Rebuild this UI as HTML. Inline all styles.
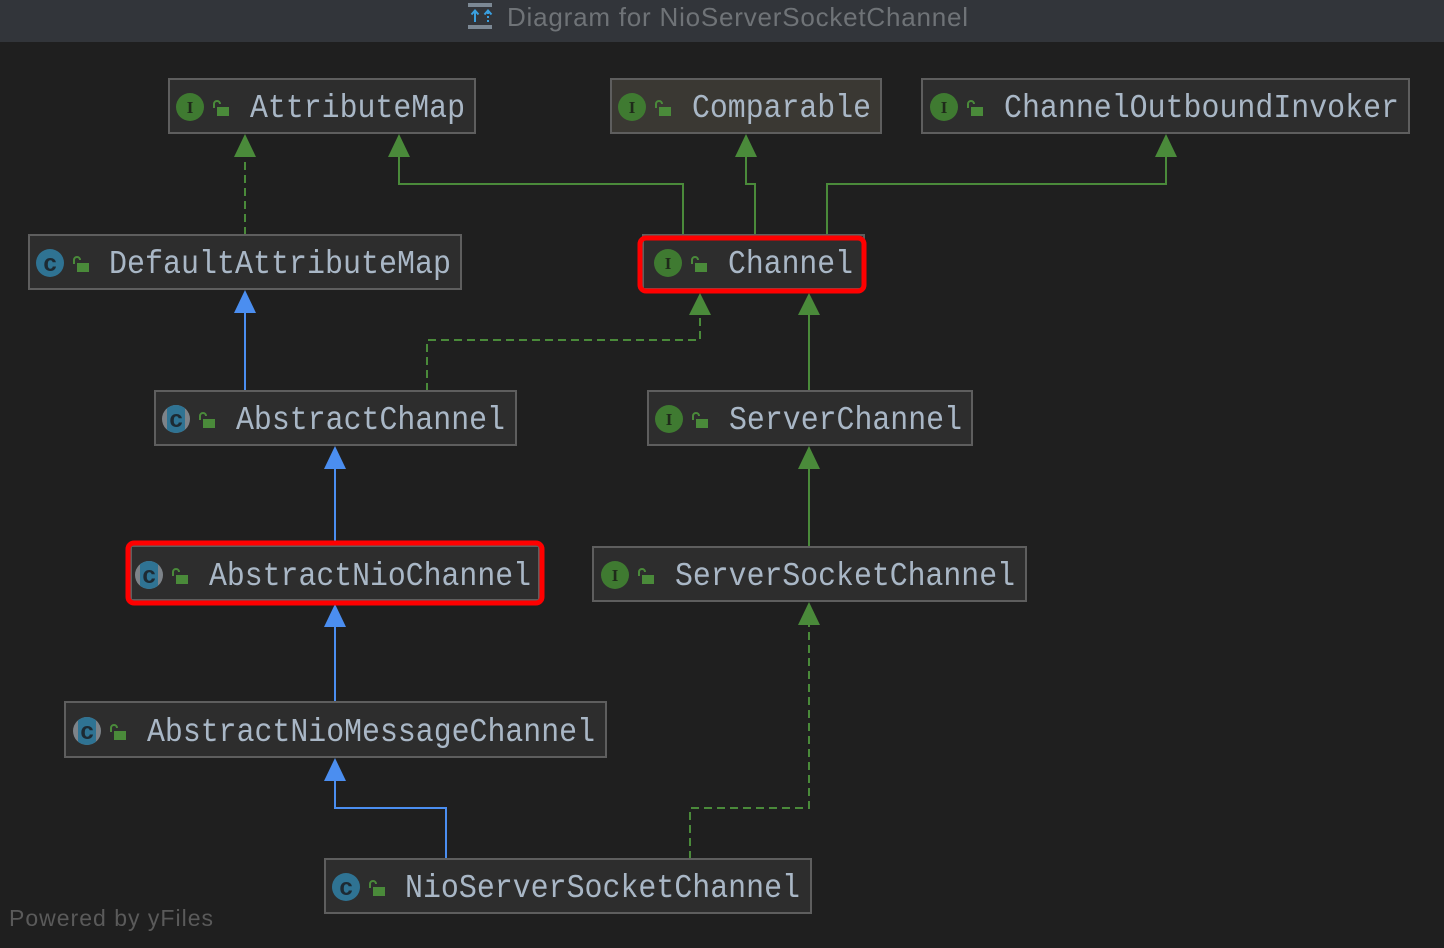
<!DOCTYPE html>
<html><head><meta charset="utf-8"><style>
html,body{margin:0;padding:0;background:#1f1f1f;width:1444px;height:948px;overflow:hidden}
svg{display:block}
.t{font-family:"Liberation Mono",monospace;font-size:33px;fill:#a9b7c6}
</style></head><body>
<svg width="1444" height="948" viewBox="0 0 1444 948" xmlns="http://www.w3.org/2000/svg">
<defs>
<clipPath id="cc"><circle cx="0" cy="0" r="14"/></clipPath>
</defs>
<rect x="0" y="0" width="1444" height="42" fill="#32353a"/>
<rect x="0" y="42" width="1444" height="906" fill="#1f1f1f"/>
<!-- title icon -->
<rect x="468" y="3" width="24" height="4" fill="#7c8894"/>
<rect x="468" y="25" width="24" height="4" fill="#7c8894"/>
<path d="M475 22V11M471.5 14.5L475 10.5L478.5 14.5" stroke="#3aa0e0" stroke-width="2" fill="none"/>
<path d="M488 22V11" stroke="#3aa0e0" stroke-width="2" stroke-dasharray="2 2" fill="none"/>
<path d="M484.5 14.5L488 10.5L491.5 14.5" stroke="#3aa0e0" stroke-width="2" fill="none"/>
<text x="507" y="26" font-family="Liberation Sans,sans-serif" font-size="26" fill="#6f7377" textLength="461">Diagram for NioServerSocketChannel</text>

<g fill="none" stroke-width="2">
<g stroke="#4a8a3a">
<path d="M683 236V184H399V152"/>
<path d="M755 236V184H746V152"/>
<path d="M827 236V184H1166V152"/>
<path d="M809 391V312"/>
<path d="M809 547V467"/>
</g>
<g stroke="#4a8a3a" stroke-dasharray="8 5">
<path d="M245 235V152"/>
<path d="M427 391V340H700V312"/>
<path d="M690 859V808H809V623"/>
</g>
<g stroke="#4b8ef0">
<path d="M245 391V310"/>
<path d="M335 546V466"/>
<path d="M335 702V625"/>
<path d="M446 859V808H335V778"/>
</g>
</g>
<g fill="#4a8a3a">
<path d="M245 134L234 157H256Z"/><path d="M399 134L388 157H410Z"/><path d="M746 134L735 157H757Z"/><path d="M1166 134L1155 157H1177Z"/>
<path d="M700 293L689 315H711Z"/><path d="M809 293L798 315H820Z"/>
<path d="M809 446L798 469H820Z"/><path d="M809 602L798 625H820Z"/>
</g>
<g fill="#4b8ef0">
<path d="M245 290L234 313H256Z"/><path d="M335 446L324 469H346Z"/><path d="M335 604L324 627H346Z"/><path d="M335 758L324 781H346Z"/>
</g>

<g stroke="#5e5e5e" stroke-width="2">
<rect x="169" y="79" width="306" height="54" fill="#2d2d2d"/>
<rect x="611" y="79" width="270" height="54" fill="#3a3833"/>
<rect x="922" y="79" width="487" height="54" fill="#2d2d2d"/>
<rect x="29" y="235" width="432" height="54" fill="#2d2d2d"/>
<rect x="643" y="235" width="221" height="54" fill="#2d2d2d"/>
<rect x="155" y="391" width="361" height="54" fill="#2d2d2d"/>
<rect x="648" y="391" width="324" height="54" fill="#2d2d2d"/>
<rect x="131" y="546" width="408" height="54" fill="#2d2d2d"/>
<rect x="593" y="547" width="433" height="54" fill="#2d2d2d"/>
<rect x="65" y="702" width="541" height="55" fill="#2d2d2d"/>
<rect x="325" y="859" width="486" height="54" fill="#2d2d2d"/>
</g>
<g fill="none" stroke="#f00" stroke-width="5">
<rect x="640" y="238" width="224" height="53" rx="6"/>
<rect x="128" y="543" width="414" height="60" rx="6"/>
</g>

<g font-family="Liberation Serif,serif" font-size="17" font-weight="bold" text-anchor="middle" fill="#1f2a1a">
<circle cx="190" cy="107" r="14" fill="#3f7a31"/><text x="190" y="113">I</text>
<circle cx="632" cy="107" r="14" fill="#3f7a31"/><text x="632" y="113">I</text>
<circle cx="944" cy="107" r="14" fill="#3f7a31"/><text x="944" y="113">I</text>
<circle cx="668" cy="263" r="14" fill="#3f7a31"/><text x="668" y="269">I</text>
<circle cx="669" cy="419" r="14" fill="#3f7a31"/><text x="669" y="425">I</text>
<circle cx="615" cy="575" r="14" fill="#3f7a31"/><text x="615" y="581">I</text>
</g>
<g font-family="Liberation Sans,sans-serif" font-size="24" font-weight="bold" text-anchor="middle" fill="#1d2a33">
<circle cx="50" cy="263" r="14" fill="#2f7393"/><text x="50" y="271">c</text>
<circle cx="346" cy="887" r="14" fill="#2f7393"/><text x="346" y="895">c</text>
<g transform="translate(176,419)"><circle r="14" fill="#7d8389"/><rect x="-9" y="-14" width="18" height="28" fill="#2f7393" clip-path="url(#cc)"/><text y="8">c</text></g>
<g transform="translate(149,575)"><circle r="14" fill="#7d8389"/><rect x="-9" y="-14" width="18" height="28" fill="#2f7393" clip-path="url(#cc)"/><text y="8">c</text></g>
<g transform="translate(87,731)"><circle r="14" fill="#7d8389"/><rect x="-9" y="-14" width="18" height="28" fill="#2f7393" clip-path="url(#cc)"/><text y="8">c</text></g>
</g>
<g fill="#4a8a3a" stroke="#4a8a3a">
<g transform="translate(214,100)"><path d="M0 8V4A3 3 0 0 1 6 4" fill="none" stroke-width="2"/><rect x="3" y="7" width="12" height="9" stroke="none"/></g>
<g transform="translate(656,100)"><path d="M0 8V4A3 3 0 0 1 6 4" fill="none" stroke-width="2"/><rect x="3" y="7" width="12" height="9" stroke="none"/></g>
<g transform="translate(968,100)"><path d="M0 8V4A3 3 0 0 1 6 4" fill="none" stroke-width="2"/><rect x="3" y="7" width="12" height="9" stroke="none"/></g>
<g transform="translate(74,256)"><path d="M0 8V4A3 3 0 0 1 6 4" fill="none" stroke-width="2"/><rect x="3" y="7" width="12" height="9" stroke="none"/></g>
<g transform="translate(692,256)"><path d="M0 8V4A3 3 0 0 1 6 4" fill="none" stroke-width="2"/><rect x="3" y="7" width="12" height="9" stroke="none"/></g>
<g transform="translate(200,412)"><path d="M0 8V4A3 3 0 0 1 6 4" fill="none" stroke-width="2"/><rect x="3" y="7" width="12" height="9" stroke="none"/></g>
<g transform="translate(693,412)"><path d="M0 8V4A3 3 0 0 1 6 4" fill="none" stroke-width="2"/><rect x="3" y="7" width="12" height="9" stroke="none"/></g>
<g transform="translate(173,568)"><path d="M0 8V4A3 3 0 0 1 6 4" fill="none" stroke-width="2"/><rect x="3" y="7" width="12" height="9" stroke="none"/></g>
<g transform="translate(639,568)"><path d="M0 8V4A3 3 0 0 1 6 4" fill="none" stroke-width="2"/><rect x="3" y="7" width="12" height="9" stroke="none"/></g>
<g transform="translate(111,724)"><path d="M0 8V4A3 3 0 0 1 6 4" fill="none" stroke-width="2"/><rect x="3" y="7" width="12" height="9" stroke="none"/></g>
<g transform="translate(370,880)"><path d="M0 8V4A3 3 0 0 1 6 4" fill="none" stroke-width="2"/><rect x="3" y="7" width="12" height="9" stroke="none"/></g>
</g>

<g>
<text class="t" x="250" y="117" textLength="215" lengthAdjust="spacingAndGlyphs">AttributeMap</text>
<text class="t" x="692" y="117" textLength="179" lengthAdjust="spacingAndGlyphs">Comparable</text>
<text class="t" x="1004" y="117" textLength="395" lengthAdjust="spacingAndGlyphs">ChannelOutboundInvoker</text>
<text class="t" x="109" y="273" textLength="342" lengthAdjust="spacingAndGlyphs">DefaultAttributeMap</text>
<text class="t" x="728" y="273" textLength="125" lengthAdjust="spacingAndGlyphs">Channel</text>
<text class="t" x="236" y="429" textLength="269" lengthAdjust="spacingAndGlyphs">AbstractChannel</text>
<text class="t" x="729" y="429" textLength="233" lengthAdjust="spacingAndGlyphs">ServerChannel</text>
<text class="t" x="209" y="585" textLength="322" lengthAdjust="spacingAndGlyphs">AbstractNioChannel</text>
<text class="t" x="675" y="585" textLength="340" lengthAdjust="spacingAndGlyphs">ServerSocketChannel</text>
<text class="t" x="147" y="741" textLength="448" lengthAdjust="spacingAndGlyphs">AbstractNioMessageChannel</text>
<text class="t" x="405" y="897" textLength="395" lengthAdjust="spacingAndGlyphs">NioServerSocketChannel</text>
</g>
<text x="9" y="926" font-family="Liberation Sans,sans-serif" font-size="23" fill="#5a5a5a" textLength="204">Powered by yFiles</text>
</svg>
</body></html>
